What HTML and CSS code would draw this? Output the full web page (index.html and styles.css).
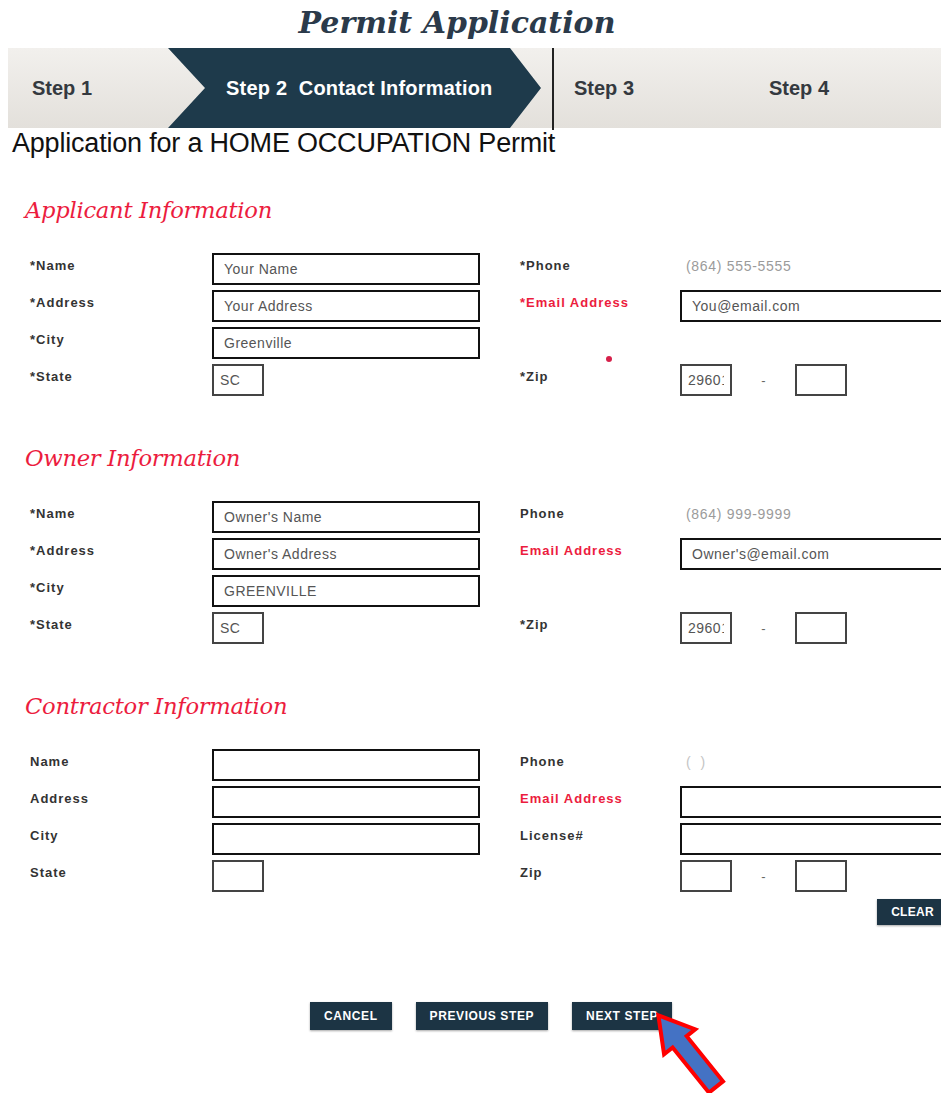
FILE: index.html
```html
<!DOCTYPE html>
<html lang="en">
<head>
<meta charset="utf-8">
<title>Permit Application</title>
<link rel="stylesheet" href="styles.css">
</head>
<body>
<div class="page">
  <h1 class="page-title">Permit Application</h1>

  <nav class="steps">
    <div class="step step-first">Step 1</div>
    <div class="step step-current">Step 2  Contact Information</div>
    <div class="step-divider"></div>
    <div class="step step-third">Step 3</div>
    <div class="step">Step 4</div>
  </nav>

  <p class="intro">Application for a HOME OCCUPATION Permit</p>

  <form class="permit-form">
    <section class="group">
      <h2 class="group-title">Applicant Information</h2>
      <div class="fields">
        <label class="lbl">*Name</label>
        <input class="box" type="text" value="Your Name">
        <label class="lbl">*Phone</label>
        <span class="phone">(864) 555-5555</span>

        <label class="lbl">*Address</label>
        <input class="box" type="text" value="Your Address">
        <label class="lbl lbl-red">*Email Address</label>
        <input class="box box-long" type="text" value="You@email.com">

        <label class="lbl">*City</label>
        <input class="box" type="text" value="Greenville">
        <span></span>
        <span></span>

        <label class="lbl">*State</label>
        <input class="box box-small" type="text" value="SC">
        <label class="lbl lbl-zip">*Zip<span class="req-dot"></span></label>
        <div class="zip">
          <input class="box box-small" type="text" value="29601">
          <span class="zip-dash">-</span>
          <input class="box box-small" type="text" value="">
        </div>
      </div>
    </section>

    <section class="group">
      <h2 class="group-title">Owner Information</h2>
      <div class="fields">
        <label class="lbl">*Name</label>
        <input class="box" type="text" value="Owner's Name">
        <label class="lbl">Phone</label>
        <span class="phone">(864) 999-9999</span>

        <label class="lbl">*Address</label>
        <input class="box" type="text" value="Owner's Address">
        <label class="lbl lbl-red">Email Address</label>
        <input class="box box-long" type="text" value="Owner's@email.com">

        <label class="lbl">*City</label>
        <input class="box" type="text" value="GREENVILLE">
        <span></span>
        <span></span>

        <label class="lbl">*State</label>
        <input class="box box-small" type="text" value="SC">
        <label class="lbl">*Zip</label>
        <div class="zip">
          <input class="box box-small" type="text" value="29601">
          <span class="zip-dash">-</span>
          <input class="box box-small" type="text" value="">
        </div>
      </div>
    </section>

    <section class="group">
      <h2 class="group-title">Contractor Information</h2>
      <div class="fields">
        <label class="lbl">Name</label>
        <input class="box" type="text" value="">
        <label class="lbl">Phone</label>
        <span class="phone phone-empty">(&nbsp;&nbsp;)</span>

        <label class="lbl">Address</label>
        <input class="box" type="text" value="">
        <label class="lbl lbl-red">Email Address</label>
        <input class="box box-long" type="text" value="">

        <label class="lbl">City</label>
        <input class="box" type="text" value="">
        <label class="lbl">License#</label>
        <input class="box box-long" type="text" value="">

        <label class="lbl">State</label>
        <input class="box box-small" type="text" value="">
        <label class="lbl">Zip</label>
        <div class="zip">
          <input class="box box-small" type="text" value="">
          <span class="zip-dash">-</span>
          <input class="box box-small" type="text" value="">
        </div>
      </div>
      <div class="clear-row">
        <button class="btn" type="button">CLEAR</button>
      </div>
    </section>

    <div class="actions">
      <button class="btn btn-lg" type="button">CANCEL</button>
      <button class="btn btn-lg" type="button">PREVIOUS STEP</button>
      <button class="btn btn-lg" type="button">NEXT STEP</button>
    </div>
  </form>

  <svg class="pointer" width="941" height="1093" viewBox="0 0 941 1093" aria-hidden="true">
    <polygon transform="translate(716 1087) rotate(-128.8)"
      points="0,-9 58,-9 58,-20 92,0 58,20 58,9 0,9"
      fill="#4472c4" stroke="#ff0000" stroke-width="4" stroke-linejoin="miter"/>
  </svg>
</div>
</body>
</html>
```

FILE: styles.css
```css
html, body {
  margin: 0;
  padding: 0;
  background: #ffffff;
  overflow: hidden;
}

body {
  font-family: "Liberation Sans", Arial, sans-serif;
  color: #222;
}

.page {
  position: relative;
  width: 950px;
  min-height: 1093px;
}

/* ---- heading ---- */
.page-title {
  margin: 0;
  height: 48px;
  line-height: 46px;
  text-align: center;
  padding-right: 36px;
  font-family: "DejaVu Serif", "Liberation Serif", serif;
  font-style: italic;
  font-weight: bold;
  font-size: 30px;
  color: #2b3a4a;
}

/* ---- step bar ---- */
.steps {
  display: flex;
  align-items: center;
  height: 80px;
  margin-left: 8px;
  background: linear-gradient(to bottom, #f2f0ed, #e3e0db);
  font-size: 20px;
  font-weight: bold;
  color: #34393f;
}

.step {
  white-space: pre;
}

.step-first {
  width: 160px;
  padding-left: 24px;
  box-sizing: border-box;
}

.step-current {
  width: 373px;
  height: 80px;
  line-height: 80px;
  padding-left: 58px;
  box-sizing: border-box;
  background: #1e3a4b;
  color: #ffffff;
  letter-spacing: 0.2px;
  clip-path: polygon(0 0, 342px 0, 100% 50%, 342px 100%, 0 100%, 37px 50%);
}

.step-divider {
  width: 2px;
  height: 82px;
  align-self: flex-start;
  margin-left: 11px;
  background: #222;
}

.step-third {
  width: 195px;
  padding-left: 20px;
}

/* ---- intro ---- */
.intro {
  margin: 0;
  padding-left: 12px;
  height: 30px;
  line-height: 30px;
  font-size: 27px;
  color: #111;
  letter-spacing: -0.2px;
}

/* ---- field groups ---- */
.group {
  margin-top: 37px;
}

.group + .group {
  margin-top: 47px;
}

.group-title {
  margin: 0 0 28px 25px;
  height: 30px;
  line-height: 30px;
  font-family: "DejaVu Serif", "Liberation Serif", serif;
  font-style: italic;
  font-weight: normal;
  font-size: 22.7px;
  color: #ec1c3e;
  letter-spacing: -0.3px;
}

.fields {
  display: grid;
  grid-template-columns: 182px 308px 160px 270px;
  grid-auto-rows: 32px;
  row-gap: 5px;
  padding-left: 30px;
}

.lbl {
  position: relative;
  padding-top: 6px;
  line-height: 14px;
  font-size: 13px;
  font-weight: bold;
  letter-spacing: 1px;
  color: #333;
}

.lbl-red {
  color: #ec1c3e;
}

.req-dot {
  position: absolute;
  left: 86px;
  top: -8px;
  width: 6px;
  height: 6px;
  border-radius: 50%;
  background: #d6204a;
}

.box {
  box-sizing: border-box;
  width: 268px;
  height: 32px;
  margin: 0;
  padding: 0 10px;
  border: 2px solid #111;
  border-radius: 0;
  background: #fff;
  font-family: "Liberation Sans", Arial, sans-serif;
  font-size: 14px;
  letter-spacing: 0.5px;
  color: #555;
  outline: none;
}

.box-long {
  width: 270px;
}

.box-small {
  width: 52px;
  padding: 0 6px;
  border: 2px solid #444;
}

.phone {
  padding-top: 5px;
  padding-left: 6px;
  font-size: 14px;
  line-height: 16px;
  letter-spacing: 0.7px;
  color: #9b9b9b;
}

.phone-empty {
  color: #c4c4c4;
}

.zip {
  display: flex;
  align-items: center;
}

.zip-dash {
  width: 63px;
  text-align: center;
  font-size: 13px;
  color: #666;
}

/* ---- buttons ---- */
.btn {
  height: 26px;
  padding: 0 14px;
  border: 0;
  border-radius: 0;
  background: #1c3444;
  color: #fff;
  font-family: "Liberation Sans", Arial, sans-serif;
  font-size: 12px;
  font-weight: bold;
  letter-spacing: 0.3px;
  box-shadow: 0 1px 2px rgba(0, 0, 0, 0.35);
}

.btn-lg {
  height: 28px;
  letter-spacing: 0.6px;
}

.clear-row {
  display: flex;
  justify-content: flex-end;
  margin-top: 7px;
  padding-right: 2px;
}

.actions {
  display: flex;
  gap: 24px;
  margin-top: 77px;
  padding-left: 310px;
}

/* ---- annotation arrow ---- */
.pointer {
  position: absolute;
  left: 0;
  top: 0;
  pointer-events: none;
}
```
